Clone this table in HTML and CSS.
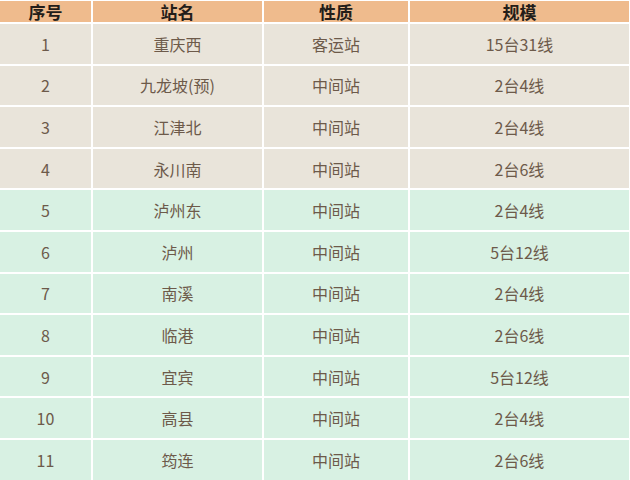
FILE: index.html
```html
<!DOCTYPE html>
<html lang="zh">
<head>
<meta charset="utf-8">
<link rel="stylesheet" href="styles.css">
</head>
<body>
<table class="stations">
  <colgroup>
    <col class="c1"><col class="c2"><col class="c3"><col class="c4">
  </colgroup>
  <thead>
    <tr><th>序号</th><th>站名</th><th>性质</th><th>规模</th></tr>
  </thead>
  <tbody>
    <tr class="a"><td>1</td><td>重庆西</td><td>客运站</td><td>15台31线</td></tr>
    <tr class="a"><td>2</td><td>九龙坡(预)</td><td>中间站</td><td>2台4线</td></tr>
    <tr class="a"><td>3</td><td>江津北</td><td>中间站</td><td>2台4线</td></tr>
    <tr class="a"><td>4</td><td>永川南</td><td>中间站</td><td>2台6线</td></tr>
    <tr class="b"><td>5</td><td>泸州东</td><td>中间站</td><td>2台4线</td></tr>
    <tr class="b"><td>6</td><td>泸州</td><td>中间站</td><td>5台12线</td></tr>
    <tr class="b"><td>7</td><td>南溪</td><td>中间站</td><td>2台4线</td></tr>
    <tr class="b"><td>8</td><td>临港</td><td>中间站</td><td>2台6线</td></tr>
    <tr class="b"><td>9</td><td>宜宾</td><td>中间站</td><td>5台12线</td></tr>
    <tr class="b"><td>10</td><td>高县</td><td>中间站</td><td>2台4线</td></tr>
    <tr class="b"><td>11</td><td>筠连</td><td>中间站</td><td>2台6线</td></tr>
  </tbody>
</table>
</body>
</html>
```
FILE: styles.css
```css
html, body {
  margin: 0;
  padding: 0;
  background: #ffffff;
}
body {
  padding-top: 1px;
  font-family: "Noto Sans CJK SC", "Noto Sans", sans-serif;
}
.stations {
  width: 629px;
  border-collapse: separate;
  border-spacing: 0;
  table-layout: fixed;
}
.c1 { width: 93px; }
.c2 { width: 171px; }
.c3 { width: 146px; }
.c4 { width: 219px; }
.stations th,
.stations td {
  text-align: center;
  padding: 0;
  border-right: 2px solid #ffffff;
  border-bottom: 2px solid #ffffff;
}
.stations th:last-child,
.stations td:last-child {
  border-right: none;
}
.stations th {
  background: #efbb8d;
  color: #231d19;
  font-weight: bold;
  font-size: 17px;
  height: 21px;
  line-height: 21px;
}
.stations td {
  height: 39.6px;
  line-height: 20px;
  font-size: 16px;
  color: #6d5a4a;
}
.stations tr.a td { background: #e9e4da; }
.stations tr.b td { background: #d8f1e3; }
```
